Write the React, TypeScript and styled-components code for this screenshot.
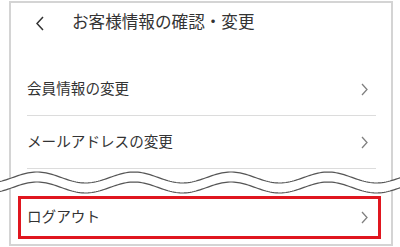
import React from "react";
import styled, { createGlobalStyle } from "styled-components";

const Global = createGlobalStyle`
  html, body { margin: 0; padding: 0; background: #fff; }
  body { font-family: "Noto Sans CJK JP", "Noto Sans", sans-serif; color: #333; }
`;

const Page = styled.div`
  position: relative;
  width: 400px;
  height: 247px;
  box-sizing: border-box;
  padding: 1px 0 0 9px;
  overflow: hidden;
`;

const Frame = styled.div`
  width: 384px;
  height: 245px;
  box-sizing: border-box;
  border: 2px solid #d4d4d4;
  display: flex;
  flex-direction: column;
`;

const Header = styled.div`
  height: 40px;
  display: flex;
  align-items: center;
  padding-left: 25px;
  flex-shrink: 0;
`;

const BackIcon = styled.svg`
  width: 8px;
  height: 15px;
  margin-right: 28px;
`;

const Title = styled.h1`
  margin: 0;
  font-size: 16.6px;
  font-weight: 400;
  line-height: 1;
  color: #333;
  margin-top: -3px;
`;

const List = styled.div`
  display: flex;
  flex-direction: column;
  margin: 20px 15px 0 16px;
`;

const Row = styled.div<{ $highlight?: boolean }>`
  display: flex;
  align-items: center;
  justify-content: space-between;
  box-sizing: border-box;
  font-size: 14.6px;
  color: #333;
  ${(p) =>
    p.$highlight
      ? `
    height: 43px;
    margin: 0 -5px 0 -9px;
    border: 3px solid #e0161f;
    padding: 0 10px 0 6px;
  `
      : `
    height: 53px;
    border-bottom: 1px solid #dcdcdc;
    padding: 0 8px 0 0;
  `}
`;

const Label = styled.span`
  line-height: 1;
  margin-top: -2px;
`;

const Gap = styled.div`
  height: 27px;
`;

const Chevron = styled.svg`
  width: 7px;
  height: 13px;
`;

const Wave = styled.svg`
  position: absolute;
  left: 0;
  top: 166px;
  width: 400px;
  height: 36px;
`;

const wavePath = (offset: number) => {
  const pts: string[] = [];
  for (let x = -2; x <= 402; x += 2) {
    const y = 11.5 + offset - 5.5 * Math.cos((2 * Math.PI * (x - 37)) / 97);
    pts.push(`${x},${y.toFixed(2)}`);
  }
  return pts;
};

const upper = wavePath(0);
const lower = wavePath(10);

const RightChevron = () => (
  <Chevron viewBox="0 0 7 13">
    <path d="M1 1 L6 6.5 L1 12" fill="none" stroke="#808080" strokeWidth="1.3" />
  </Chevron>
);

export default function App() {
  return (
    <>
      <Global />
      <Page>
        <Frame>
          <Header>
            <BackIcon viewBox="0 0 8 15">
              <path d="M7 1 L1 7.5 L7 14" fill="none" stroke="#333" strokeWidth="1.5" />
            </BackIcon>
            <Title>お客様情報の確認・変更</Title>
          </Header>
          <List>
            <Row>
              <Label>会員情報の変更</Label>
              <RightChevron />
            </Row>
            <Row>
              <Label>メールアドレスの変更</Label>
              <RightChevron />
            </Row>
            <Gap />
            <Row $highlight>
              <Label>ログアウト</Label>
              <RightChevron />
            </Row>
          </List>
        </Frame>
        <Wave viewBox="0 0 400 36">
          <polygon points={[...upper, ...lower.slice().reverse()].join(" ")} fill="#fff" />
          <polyline points={upper.join(" ")} fill="none" stroke="#555" strokeWidth="1.2" />
          <polyline points={lower.join(" ")} fill="none" stroke="#555" strokeWidth="1.2" />
        </Wave>
      </Page>
    </>
  );
}
